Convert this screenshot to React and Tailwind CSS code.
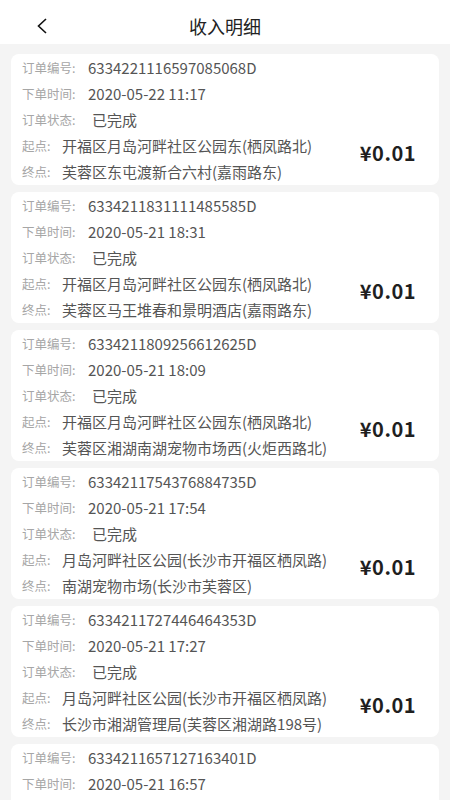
import React from "react";

const orders = [
  {
    no: "6334221116597085068D",
    time: "2020-05-22 11:17",
    from: "开福区月岛河畔社区公园东(栖凤路北)",
    to: "芙蓉区东屯渡新合六村(嘉雨路东)",
  },
  {
    no: "6334211831111485585D",
    time: "2020-05-21 18:31",
    from: "开福区月岛河畔社区公园东(栖凤路北)",
    to: "芙蓉区马王堆春和景明酒店(嘉雨路东)",
  },
  {
    no: "6334211809256612625D",
    time: "2020-05-21 18:09",
    from: "开福区月岛河畔社区公园东(栖凤路北)",
    to: "芙蓉区湘湖南湖宠物市场西(火炬西路北)",
  },
  {
    no: "6334211754376884735D",
    time: "2020-05-21 17:54",
    from: "月岛河畔社区公园(长沙市开福区栖凤路)",
    to: "南湖宠物市场(长沙市芙蓉区)",
  },
  {
    no: "6334211727446464353D",
    time: "2020-05-21 17:27",
    from: "月岛河畔社区公园(长沙市开福区栖凤路)",
    to: "长沙市湘湖管理局(芙蓉区湘湖路198号)",
  },
  {
    no: "6334211657127163401D",
    time: "2020-05-21 16:57",
    from: "月岛河畔社区公园(长沙市开福区栖凤路)",
    to: "南湖宠物市场(长沙市芙蓉区)",
  },
];

const Row = ({ label, value, wide, indent }) => (
  <div className="h-[26px] flex flex-row items-center whitespace-nowrap">
    <span className={`text-[12.5px] text-[#a6a6a6] ${wide ? "w-[66px]" : "w-[40px]"}`}>
      {label}
    </span>
    <span className={`text-[15px] text-[#555] ${indent ? "pl-[4px]" : ""}`}>{value}</span>
  </div>
);

const OrderCard = ({ item }) => (
  <div className="bg-white rounded-lg pl-[11px] pr-[23px] pt-px flex flex-row justify-between">
    <div className="flex flex-col">
      <Row label="订单编号:" value={item.no} wide />
      <Row label="下单时间:" value={item.time} wide />
      <Row label="订单状态:" value="已完成" wide indent />
      <Row label="起点:" value={item.from} />
      <Row label="终点:" value={item.to} />
    </div>
    <div className="flex flex-col justify-end pb-[20px]">
      <b className="text-[20px] leading-[24px] text-[#1f1f1f] tracking-[0.5px]">¥0.01</b>
    </div>
  </div>
);

const App = () => {
  return (
    <div
      className="w-[450px] h-[800px] overflow-hidden bg-[#f4f4f4]"
      style={{ fontFamily: '"Noto Sans CJK SC", "Noto Sans", sans-serif' }}
    >
      <div className="h-[44px] bg-white flex flex-row items-center pt-[8px]">
        <div className="w-[84px] flex items-center pl-[36px]">
          <svg width="12" height="18" viewBox="0 0 12 18">
            <path d="M10 2 L2.5 9 L10 16" fill="none" stroke="#111" strokeWidth="1.6" />
          </svg>
        </div>
        <p className="flex-1 text-center text-[18px] text-[#222] pr-[84px]">收入明细</p>
      </div>
      <div className="flex flex-col gap-[7px] pt-[10px] px-[11px]">
        {orders.map((item, index) => (
          <OrderCard key={index} item={item} />
        ))}
      </div>
    </div>
  );
};

export default App;
